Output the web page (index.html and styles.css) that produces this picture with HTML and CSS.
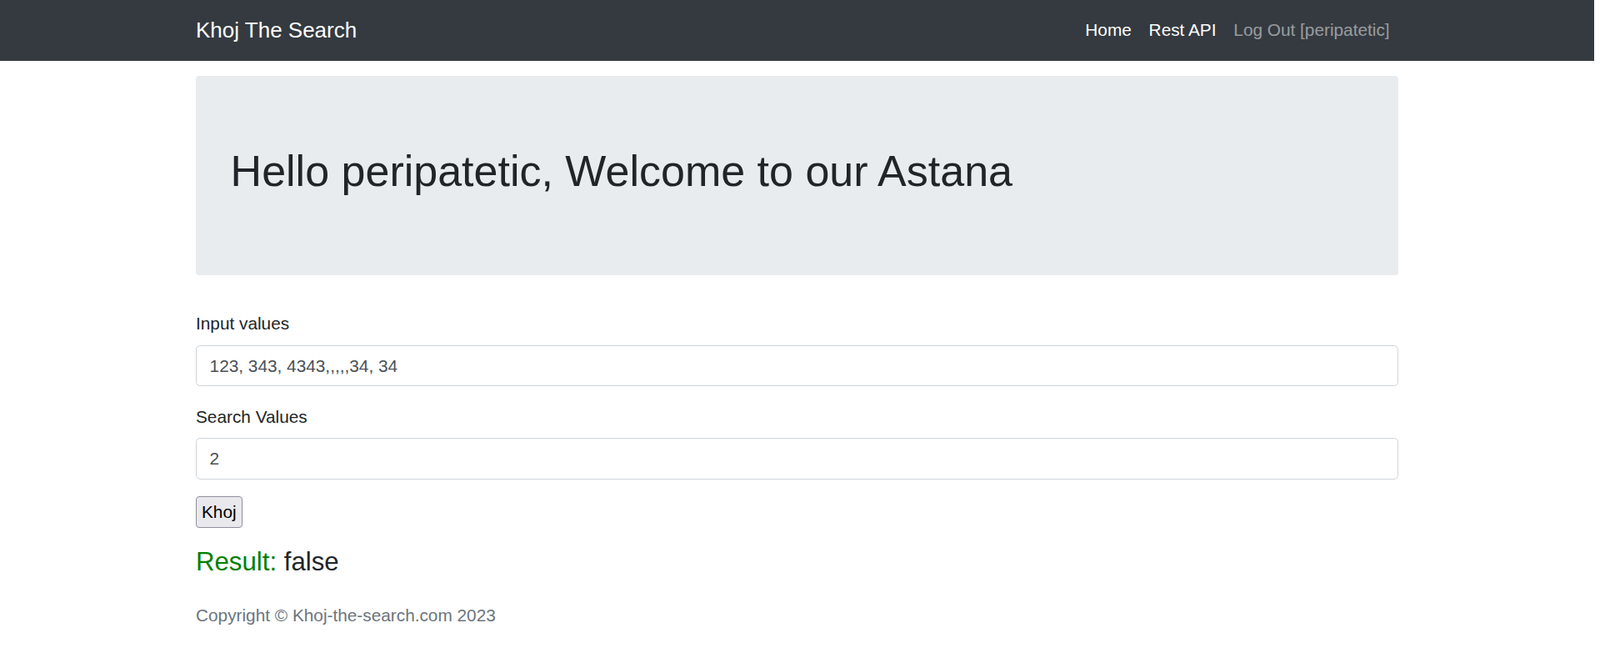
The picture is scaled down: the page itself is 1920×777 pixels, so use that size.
FILE: index.html
```html
<!DOCTYPE html>
<html lang="en">
<head>
<meta charset="utf-8">
<title>Khoj The Search</title>
<link rel="stylesheet" href="styles.css">
</head>
<body>
<nav class="navbar">
  <div class="container nav-inner">
    <a class="brand" href="#">Khoj The Search</a>
    <ul class="nav-list">
      <li><a class="nav-link active" href="#">Home</a></li>
      <li><a class="nav-link active" href="#">Rest API</a></li>
      <li><a class="nav-link" href="#">Log Out [peripatetic]</a></li>
    </ul>
  </div>
</nav>
<main class="container main">
  <section class="jumbotron">
    <h1 class="hero-title">Hello peripatetic, Welcome to our Astana</h1>
  </section>
  <form class="search-form">
    <div class="form-group">
      <label class="form-label" for="inputs">Input values</label>
      <input class="form-control" id="inputs" type="text" value="123, 343, 4343,,,,,34, 34">
    </div>
    <div class="form-group">
      <label class="form-label" for="search">Search Values</label>
      <input class="form-control" id="search" type="text" value="2">
    </div>
    <button class="khoj-btn" type="button">Khoj</button>
  </form>
  <h4 class="result"><span class="result-label">Result:</span> false</h4>
  <footer class="footer">Copyright © Khoj-the-search.com 2023</footer>
</main>
</body>
</html>
```
FILE: styles.css
```css
* { box-sizing: border-box; }

html { background: #fff; }

body {
  margin: 0 7px 0 0;
  font-family: "Liberation Sans", Arial, sans-serif;
  font-size: 20.8px;
  line-height: 1.5;
  color: #212529;
  background: #fff;
}

.container {
  width: 100%;
  max-width: 1482px;
  margin: 0 auto;
  padding: 0 19.5px;
}

.navbar {
  background: #343a40;
  padding: 10.4px 0;
}

.nav-inner {
  display: flex;
  align-items: center;
  justify-content: space-between;
}

.brand {
  color: #fff;
  text-decoration: none;
  font-size: 26px;
  line-height: 39px;
  padding: 6.5px 0;
  margin-right: 20.8px;
}

.nav-list {
  display: flex;
  list-style: none;
  margin: 0;
  padding: 0;
}

.nav-link {
  display: block;
  padding: 9.4px 10.4px 11.4px;
  line-height: 31.2px;
  color: rgba(255, 255, 255, 0.5);
  text-decoration: none;
}

.nav-link.active { color: #fff; }

.main { padding-top: 18.3px; }

.jumbotron {
  background: #e9ecef;
  border-radius: 3.9px;
  padding: 83.2px 41.6px;
  margin-bottom: 42px;
}

.hero-title {
  margin: 0 0 10.4px;
  font-size: 52px;
  line-height: 62.4px;
  font-weight: 400;
}

.form-group { margin-bottom: 20.4px; }

.form-label {
  display: inline-block;
  margin-bottom: 10.4px;
  line-height: 31.2px;
}

.form-control {
  display: block;
  width: 100%;
  height: 49.4px;
  padding: 7.8px 15.6px;
  font-family: inherit;
  font-size: 20.8px;
  line-height: 31.2px;
  color: #495057;
  background: #fff;
  border: 1.3px solid #ced4da;
  border-radius: 5.2px;
  outline: none;
}

.khoj-btn {
  display: block;
  margin: 0;
  height: 38px;
  padding: 0 6px;
  font-family: inherit;
  font-size: 20.8px;
  line-height: 36px;
  color: #000;
  background: #e9e9ed;
  border: 1px solid #8f8f9d;
  border-radius: 4px;
}

.result {
  margin: 22.2px 0 10.4px;
  font-size: 31.2px;
  line-height: 37.4px;
  font-weight: 400;
}

.result-label { color: #008000; }

.footer {
  padding-top: 18.6px;
  color: #6c757d;
  line-height: 31.2px;
}
```
